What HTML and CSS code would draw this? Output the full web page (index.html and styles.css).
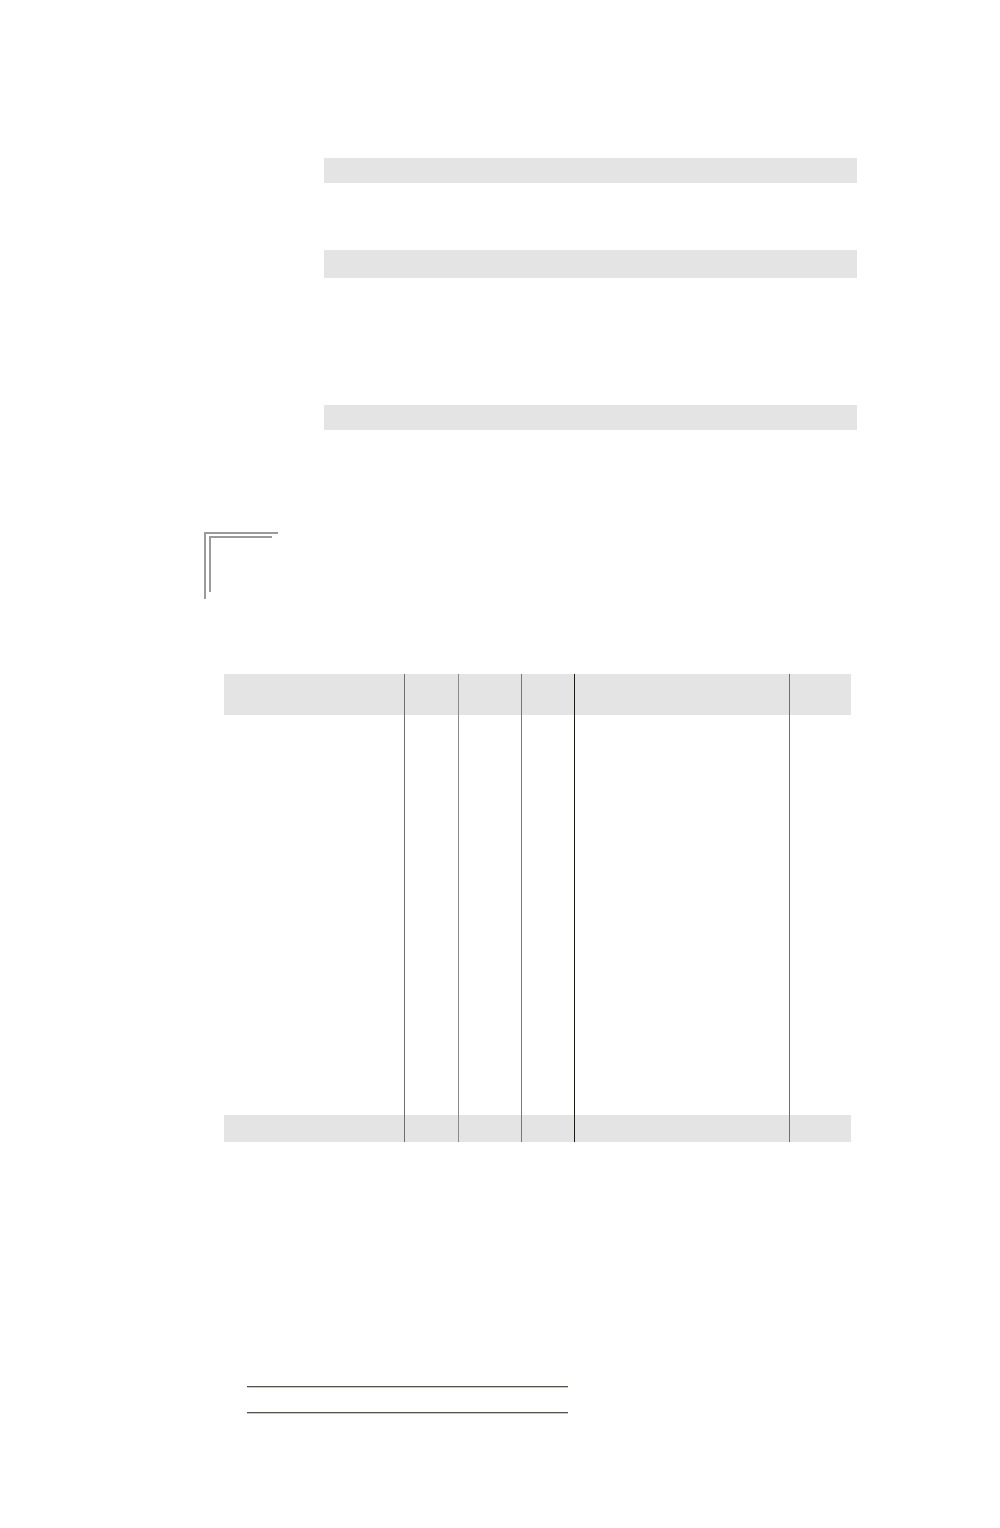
FILE: index.html
```html
<!DOCTYPE html>
<html lang="en">
<head>
<meta charset="utf-8">
<title>Form</title>
<link rel="stylesheet" href="styles.css">
</head>
<body>
<div class="page">
  <div class="bars">
    <div class="bar bar-1"></div>
    <div class="bar bar-2"></div>
    <div class="bar bar-3"></div>
  </div>

  <div class="corner">
    <div class="corner-inner"></div>
  </div>

  <div class="grid">
    <div class="cell head c1"></div>
    <div class="cell head c2"></div>
    <div class="cell head c3"></div>
    <div class="cell head c4"></div>
    <div class="cell head c5"></div>
    <div class="cell head c6"></div>

    <div class="cell c1"></div>
    <div class="cell c2"></div>
    <div class="cell c3"></div>
    <div class="cell c4"></div>
    <div class="cell c5"></div>
    <div class="cell c6"></div>

    <div class="cell foot c1"></div>
    <div class="cell foot c2"></div>
    <div class="cell foot c3"></div>
    <div class="cell foot c4"></div>
    <div class="cell foot c5"></div>
    <div class="cell foot c6"></div>
  </div>

  <div class="signatures">
    <div class="sig-line"></div>
    <div class="sig-line sig-line-2"></div>
  </div>
</div>
</body>
</html>
```

FILE: styles.css
```css
html, body {
  margin: 0;
  padding: 0;
  background: #ffffff;
  font-family: "Liberation Sans", Arial, sans-serif;
}

.page {
  width: 1000px;
  padding-top: 158px;
  padding-bottom: 100px;
}

.bars {
  margin-left: 324px;
  width: 533px;
  display: flex;
  flex-direction: column;
}

.bar {
  background: #e4e4e4;
}

.bar-1 {
  height: 25px;
}

.bar-2 {
  height: 28px;
  margin-top: 67px;
}

.bar-3 {
  height: 25px;
  margin-top: 127px;
}

.corner {
  margin-top: 102px;
  margin-left: 204px;
  width: 72px;
  height: 65px;
  border-top: 2px solid #9a9a9a;
  border-left: 2px solid #9a9a9a;
}

.corner-inner {
  margin-left: 3px;
  margin-top: 2px;
  width: 61px;
  height: 54px;
  border-top: 2px solid #9a9a9a;
  border-left: 2px solid #9a9a9a;
}

.grid {
  margin-top: 75px;
  margin-left: 224px;
  width: 627px;
  display: grid;
  grid-template-columns: 181px 54px 63px 53px 215px 61px;
  grid-template-rows: 41px 400px 27px;
}

.cell {
  box-sizing: border-box;
}

.head, .foot {
  background: #e4e4e4;
}

.c1 { border-right: 1px solid #6e6e6e; }
.c2 { border-right: 1px solid #8a8a8a; }
.c3 { border-right: 1px solid #777777; }
.c4 { border-right: 1px solid #1e1a16; }
.c5 { border-right: 1px solid #6e6e6e; }

.signatures {
  margin-top: 244px;
  margin-left: 247px;
  width: 321px;
}

.sig-line {
  height: 1px;
  background: #55524a;
  box-shadow: 0 1px 0 #c8c8c4;
}

.sig-line-2 {
  margin-top: 25px;
}
```
